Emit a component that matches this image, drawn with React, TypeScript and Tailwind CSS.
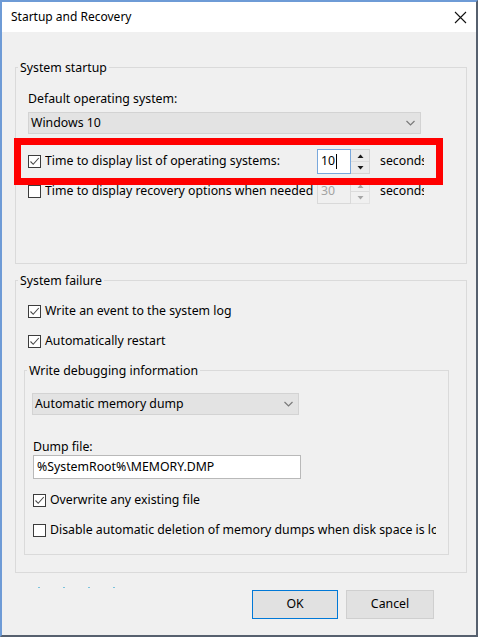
import React from "react";

function CheckBox({ checked }: { checked?: boolean }) {
    return (
        <div className="w-[13px] h-[13px] shrink-0 border border-[#3c3c3c] bg-white flex items-center justify-center">
            {checked && (
                <svg width="11" height="11" viewBox="0 0 11 11">
                    <path d="M1.5 5.5 L4.2 8.3 L9.8 2" fill="none" stroke="#4a4a4a" strokeWidth="1.1" />
                </svg>
            )}
        </div>
    );
}

function Chevron() {
    return (
        <svg width="9" height="6" viewBox="0 0 9 6">
            <path d="M0.5 1 L4.5 5 L8.5 1" fill="none" stroke="#7a7a7a" strokeWidth="1.2" />
        </svg>
    );
}

function Arrow({ up, disabled }: { up?: boolean; disabled?: boolean }) {
    return (
        <svg width="7" height="4" viewBox="0 0 7 4">
            <path
                d={up ? "M0.5 4 L3.5 0.5 L6.5 4 Z" : "M0.5 0 L3.5 3.5 L6.5 0 Z"}
                fill={disabled ? "#a6a6a6" : "#1a1a1a"}
            />
        </svg>
    );
}

function SpinBox({ value, disabled }: { value: string; disabled?: boolean }) {
    return (
        <div className="flex h-[25px] shrink-0">
            <div
                className={
                    disabled
                        ? "w-[34px] h-full border border-[#d9d9d9] bg-[#f0f0f0] text-[#a3a3a3] pl-[3px] flex items-center"
                        : "w-[34px] h-full border border-[#79a8dc] bg-white text-black pl-[3px] flex items-center"
                }
            >
                <span>{value}</span>
                {!disabled && <span className="w-px h-[15px] bg-black ml-px" />}
            </div>
            <div
                className={
                    disabled
                        ? "w-[19px] h-full flex flex-col border border-l-0 border-[#e2e2e2] bg-[#f0f0f0]"
                        : "w-[19px] h-full flex flex-col border border-l-0 border-[#d4d4d4] bg-[#ebebeb]"
                }
            >
                <div className="flex-1 flex items-center justify-center border-b border-[#dcdcdc]">
                    <Arrow up disabled={disabled} />
                </div>
                <div className="flex-1 flex items-center justify-center">
                    <Arrow disabled={disabled} />
                </div>
            </div>
        </div>
    );
}

function Select({ label, width }: { label: string; width: string }) {
    return (
        <div
            className={`${width} h-[22px] border border-[#d3d3d3] bg-[#e3e3e3] flex items-center justify-between pl-[2px] pr-[5px]`}
        >
            <span>{label}</span>
            <Chevron />
        </div>
    );
}

export default function App() {
    return (
        <div className="w-[480px] h-[638px] bg-white font-['Noto_Sans',sans-serif] text-[12.3px] text-black">
            <div className="w-[478px] h-[637px] flex flex-col border-l-2 border-t-2 border-l-[#6e9bd6] border-t-[#6e9bd6] border-r-2 border-b-2 border-r-[#56606e] border-b-[#56606e]">
                {/* title bar */}
                <div className="h-[30px] bg-white flex items-center justify-between pl-[9px] pr-[8px] shrink-0">
                    <span className="leading-[17px] -mt-[1px] text-[12px]">Startup and Recovery</span>
                    <svg width="13" height="13" viewBox="0 0 13 13" className="mr-[1px]">
                        <path d="M1 1 L12 12 M12 1 L1 12" stroke="#111" strokeWidth="1.1" />
                    </svg>
                </div>

                <div className="flex-1 bg-[#f0f0f0] flex flex-col px-[13px] pt-[27px]">
                    {/* System startup */}
                    <fieldset className="border border-[#dadada] pl-[12px] pb-[59px] w-[452px]">
                        <legend className="-ml-[10px] px-[2px] leading-[17px]">System startup</legend>
                        <div className="leading-[17px] mt-[14px]">Default operating system:</div>
                        <div className="mt-[5px]">
                            <Select label="Windows 10" width="w-[393px]" />
                        </div>

                        <div className="relative mt-[15px]">
                            <div className="flex items-center h-[25px]">
                                <CheckBox checked />
                                <div className="w-[272px] ml-[4px] whitespace-nowrap overflow-hidden">
                                    Time to display list of operating systems:
                                </div>
                                <SpinBox value="10" />
                                <div className="w-[44px] ml-[10px] whitespace-nowrap overflow-hidden">seconds</div>
                            </div>
                            <div className="absolute -left-[14px] -top-[11px] w-[429px] h-[47px] border-[7px] border-[#ff0000]" />
                        </div>

                        <div className="flex items-center h-[25px] mt-[5px]">
                            <CheckBox />
                            <div className="w-[272px] ml-[4px] whitespace-nowrap overflow-hidden">
                                Time to display recovery options when needed
                            </div>
                            <SpinBox value="30" disabled />
                            <div className="w-[44px] ml-[10px] whitespace-nowrap overflow-hidden">seconds</div>
                        </div>
                    </fieldset>

                    {/* System failure */}
                    <fieldset className="border border-[#dadada] pl-[8px] pb-[17px] w-[452px] mt-[8px]">
                        <legend className="-ml-[6px] px-[2px] leading-[17px]">System failure</legend>
                        <div className="flex items-center h-[20px] mt-[12px] pl-[4px]">
                            <CheckBox checked />
                            <span className="ml-[4px]">Write an event to the system log</span>
                        </div>
                        <div className="flex items-center h-[20px] mt-[10px] pl-[4px]">
                            <CheckBox checked />
                            <span className="ml-[4px]">Automatically restart</span>
                        </div>

                        <fieldset className="border border-[#dadada] pl-[7px] pb-[14px] w-[425px] mt-[11px]">
                            <legend className="-ml-[5px] px-[2px] leading-[17px]">Write debugging information</legend>
                            <div className="mt-[14px]">
                                <Select label="Automatic memory dump" width="w-[267px]" />
                            </div>
                            <div className="leading-[16px] mt-[24px] pl-[1px]">Dump file:</div>
                            <div className="w-[268px] h-[24px] ml-[1px] border border-[#b9b9b9] bg-white flex items-center pl-[3px]">
                                %SystemRoot%\MEMORY.DMP
                            </div>
                            <div className="flex items-center h-[20px] mt-[11px] pl-[1px]">
                                <CheckBox checked />
                                <span className="ml-[4px]">Overwrite any existing file</span>
                            </div>
                            <div className="flex items-center h-[20px] mt-[10px] pl-[1px]">
                                <CheckBox />
                                <span className="ml-[4px] w-[386px] whitespace-nowrap overflow-hidden">
                                    Disable automatic deletion of memory dumps when disk space is low
                                </span>
                            </div>
                        </fieldset>
                    </fieldset>

                    {/* faint leftover dots */}
                    <div className="flex gap-[23px] pl-[23px] mt-[14px] h-px">
                        <span className="w-[2px] h-px bg-[#7cc3dc]" />
                        <span className="w-[2px] h-px bg-[#7cc3dc]" />
                        <span className="w-[2px] h-px bg-[#7cc3dc]" />
                        <span className="w-[2px] h-px bg-[#7cc3dc]" />
                    </div>

                    <div className="flex justify-end gap-[8px] mt-[2px] pr-[29px]">
                        <button className="w-[86px] h-[29px] border border-[#0078d7] bg-[#e1e1e1] outline-none">
                            OK
                        </button>
                        <button className="w-[88px] h-[29px] border border-[#cfcfcf] bg-[#e1e1e1] outline-none">
                            Cancel
                        </button>
                    </div>
                </div>
            </div>
        </div>
    );
}
